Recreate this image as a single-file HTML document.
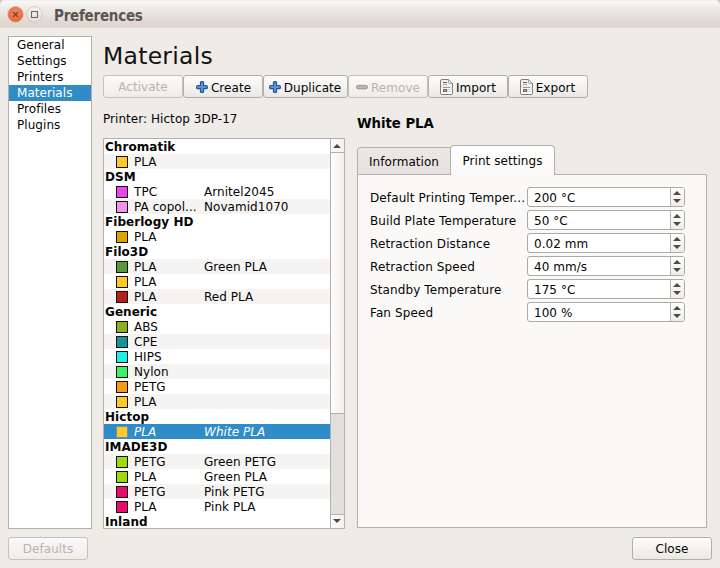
<!DOCTYPE html>
<html><head><meta charset="utf-8"><title>Preferences</title>
<style>
*{box-sizing:border-box;margin:0;padding:0}
html,body{width:720px;height:568px;overflow:hidden}
body{background:#efebe7;font-family:"DejaVu Sans","Liberation Sans",sans-serif;font-size:12px;letter-spacing:0.05px;color:#050505;position:relative}
.abs{position:absolute}
#titlebar{left:0;top:0;width:720px;height:28px;background:linear-gradient(#eeece9 0,#f8f7f5 1.500px,#f4f2ef 4px,#e9e5e0 13px,#e1dad3 21px,#ddd5cd 27px,#e6e0da 27.800px,#ebe6e1 28px);border-top-left-radius:5px;border-top-right-radius:5px}
#title{left:54px;top:7px;font-weight:bold;font-size:15px;color:#5a5550;line-height:18px;font-family:"DejaVu Sans Condensed","DejaVu Sans","Liberation Sans",sans-serif;letter-spacing:-0.25px}
#wbtns{left:0;top:0}
#side{left:8px;top:36px;width:84px;height:493px;background:#fff;border:1px solid #b4afa9}
#side div{height:16px;line-height:16px;padding-left:8px}
#side .sel{background:#308cc6;color:#fff}
#h1{left:103px;top:39px;font-size:23.5px;line-height:34px;color:#111;letter-spacing:0.25px}
.btn{top:75px;height:23px;border:1px solid #b3aea8;border-radius:3px;background:linear-gradient(#fdfdfc,#ebe8e4);line-height:25px;text-align:center;white-space:nowrap}
.btn.dis{color:#b7b3af;background:linear-gradient(#fbfaf9,#efece8);border-color:#c6c1bb}
.btn svg{vertical-align:-2px;margin-right:4px}
.btn svg.doc{vertical-align:-3px;margin-left:1px;margin-right:2px}
.btn svg.minus{vertical-align:-3px;margin-right:2px;margin-left:0}
.btn svg.plus{vertical-align:-2px;margin-right:2px;margin-left:1px}
#printer{left:103px;top:111px;line-height:16px}
#list{left:103px;top:138px;width:242px;height:391px;background:#fff;border:1px solid #b4afa9;overflow:hidden}
#rows{position:absolute;left:0;top:0;width:226px}
.r{height:15px;line-height:17px;position:relative;white-space:nowrap}
.g{font-weight:bold;padding-left:1px}
.alt{background:#f5f4f2}
.sw{position:absolute;left:12px;top:2px;width:12px;height:12px;border:1px solid #111}
.c1{position:absolute;left:30px}
.c2{position:absolute;left:100px}
.r.sel{background:#308cc6;color:#fff;font-style:italic}
#sb{left:226px;top:0;width:14px;height:389px;border-left:1px solid #b4afa9;background:#e2e0dd}
#wp{left:357px;top:114px;font-weight:bold;font-size:13.3px;line-height:19px;letter-spacing:-0.05px}
#pane{left:357px;top:174px;width:350px;height:354px;background:#fbf9f7;border:1px solid #b4afa9}
.tab{border:1px solid #b4afa9;border-bottom:none;text-align:center}
#t1{left:357px;top:147px;width:94px;height:27px;background:linear-gradient(#ebe8e5,#e5e2de);line-height:28px;border-top-left-radius:4px}
#t2{left:450px;top:145px;width:105px;height:30px;background:linear-gradient(#fff,#fbf9f7);line-height:31px;border-top-left-radius:4px;border-top-right-radius:4px}
.lbl{left:370px;line-height:16px;letter-spacing:0.11px}
.spin{left:527px;width:158px;height:20px;border:1px solid #aea9a3;border-radius:3px;background:#fff;line-height:20px;padding-left:6px}
.spin i{position:absolute;right:0;top:0;width:14px;height:18px;border-left:1px solid #bab5af;background:linear-gradient(#fff,#efedea);border-radius:0 2px 2px 0}
.spin i:before{content:"";position:absolute;left:2px;top:3px;border:4px solid transparent;border-top:none;border-bottom:4px solid #4a4a4a}
.spin i:after{content:"";position:absolute;left:2px;top:11px;border:4px solid transparent;border-bottom:none;border-top:4px solid #4a4a4a}
</style></head><body>
<div class="abs" style="left:0;top:0;width:720px;height:8px;background:#cdcac5"></div>
<div id="titlebar" class="abs"></div>
<svg id="wbtns" class="abs" width="50" height="28" viewBox="0 0 50 28">
<defs><radialGradient id="cg" cx="50%" cy="35%" r="65%"><stop offset="0" stop-color="#f18a62"/><stop offset="1" stop-color="#e86537"/></radialGradient>
<linearGradient id="mg" x1="0" y1="0" x2="0" y2="1"><stop offset="0" stop-color="#f7f6f4"/><stop offset="1" stop-color="#e4dfd9"/></linearGradient></defs>
<circle cx="15.500" cy="14.300" r="7.600" fill="url(#cg)" stroke="#d9835f" stroke-width="0.600"/>
<path d="M13 11.800l5 5M18 11.800l-5 5" stroke="#6b3a26" stroke-width="1.200" fill="none"/>
<circle cx="34.500" cy="14.300" r="7.700" fill="url(#mg)" stroke="#c9bfb5" stroke-width="0.800"/>
<rect x="31.500" y="11.500" width="6" height="6" fill="none" stroke="#70665d" stroke-width="1.100"/>
</svg>
<div id="title" class="abs">Preferences</div>

<div id="side" class="abs">
<div>General</div><div>Settings</div><div>Printers</div><div class="sel">Materials</div><div>Profiles</div><div>Plugins</div>
</div>

<div id="h1" class="abs">Materials</div>

<div class="abs btn dis" style="left:103px;width:80px;line-height:23px">Activate</div>
<div class="abs btn" style="left:183px;width:80px"><svg class="plus" width="13" height="13" viewBox="0 0 13 13"><rect x="3.900" y="0.100" width="4.200" height="11.900" rx="1.500" fill="#23539d"/><rect x="0.050" y="3.950" width="11.900" height="4.200" rx="1.500" fill="#23539d"/><rect x="5" y="1.200" width="2" height="9.700" rx="0.800" fill="#6191d0"/><rect x="1.150" y="5.050" width="9.700" height="2" rx="0.800" fill="#6191d0"/></svg>Create</div>
<div class="abs btn" style="left:263px;width:85px;padding-right:2px"><svg class="plus" width="13" height="13" viewBox="0 0 13 13"><rect x="3.900" y="0.100" width="4.200" height="11.900" rx="1.500" fill="#23539d"/><rect x="0.050" y="3.950" width="11.900" height="4.200" rx="1.500" fill="#23539d"/><rect x="5" y="1.200" width="2" height="9.700" rx="0.800" fill="#6191d0"/><rect x="1.150" y="5.050" width="9.700" height="2" rx="0.800" fill="#6191d0"/></svg>Duplicate</div>
<div class="abs btn dis" style="left:348px;width:80px"><svg class="minus" width="13" height="13" viewBox="0 0 13 13"><rect x="0.500" y="3.400" width="11" height="3.400" rx="1.600" fill="#b9b7b3" stroke="#908e8a" stroke-width="0.900"/></svg>Remove</div>
<div class="abs btn" style="left:428px;width:80px;padding-right:1px"><svg class="doc" width="14" height="16" viewBox="0 0 14 16"><path d="M2 0.500H8.500L12.500 4.500V14a1.500 1.500 0 0 1 -1.500 1.500H2a1.500 1.500 0 0 1 -1.500 -1.500V2a1.500 1.500 0 0 1 1.500 -1.500z" fill="#efefed" stroke="#7d7f7a"/><path d="M1 9.500h11v4a1.500 1.500 0 0 1 -1.500 1.500h-8a1.500 1.500 0 0 1 -1.500 -1.500z" fill="#fdfdfd"/><path d="M8.500 0.700V3a1.500 1.500 0 0 0 1.500 1.500H12.300z" fill="#fff" stroke="#8d8f8a" stroke-width="0.800" stroke-linejoin="round"/><path d="M3 3.500H7" stroke="#5e5f5c" fill="none"/><path d="M3 5.500H7" stroke="#a8a9a6" fill="none"/><path d="M3 8.500H10" stroke="#969794" fill="none"/><path d="M8.500 10.500H10.500M8.500 12.500H10.500" stroke="#bdbebb" fill="none"/><rect x="3" y="10" width="4.200" height="3" rx="0.600" fill="#5a5b58"/><rect x="4" y="10.800" width="2.200" height="1.300" fill="#f7a823"/></svg>Import</div>
<div class="abs btn" style="left:508px;width:80px;padding-right:2px"><svg class="doc" width="14" height="16" viewBox="0 0 14 16"><path d="M2 0.500H8.500L12.500 4.500V14a1.500 1.500 0 0 1 -1.500 1.500H2a1.500 1.500 0 0 1 -1.500 -1.500V2a1.500 1.500 0 0 1 1.500 -1.500z" fill="#efefed" stroke="#7d7f7a"/><path d="M1 9.500h11v4a1.500 1.500 0 0 1 -1.500 1.500h-8a1.500 1.500 0 0 1 -1.500 -1.500z" fill="#fdfdfd"/><path d="M8.500 0.700V3a1.500 1.500 0 0 0 1.500 1.500H12.300z" fill="#fff" stroke="#8d8f8a" stroke-width="0.800" stroke-linejoin="round"/><path d="M3 3.500H7" stroke="#5e5f5c" fill="none"/><path d="M3 5.500H7" stroke="#a8a9a6" fill="none"/><path d="M3 8.500H10" stroke="#969794" fill="none"/><path d="M8.500 10.500H10.500M8.500 12.500H10.500" stroke="#bdbebb" fill="none"/><rect x="3" y="10" width="4.200" height="3" rx="0.600" fill="#5a5b58"/><rect x="4" y="10.800" width="2.200" height="1.300" fill="#f7a823"/></svg>Export</div>

<div id="printer" class="abs">Printer: Hictop 3DP-17</div>

<div id="list" class="abs"><div id="rows">
<div class="r g">Chromatik</div>
<div class="r alt"><b class="sw" style="background:#ffc924"></b><span class="c1">PLA</span></div>
<div class="r g">DSM</div>
<div class="r"><b class="sw" style="background:#ec45ec"></b><span class="c1">TPC</span><span class="c2">Arnitel2045</span></div>
<div class="r alt"><b class="sw" style="background:#f093f0"></b><span class="c1">PA copol...</span><span class="c2">Novamid1070</span></div>
<div class="r g">Fiberlogy HD</div>
<div class="r"><b class="sw" style="background:#dfa300"></b><span class="c1">PLA</span></div>
<div class="r g">Filo3D</div>
<div class="r alt"><b class="sw" style="background:#5b9a3c"></b><span class="c1">PLA</span><span class="c2">Green PLA</span></div>
<div class="r"><b class="sw" style="background:#ffc924"></b><span class="c1">PLA</span></div>
<div class="r alt"><b class="sw" style="background:#b8211a"></b><span class="c1">PLA</span><span class="c2">Red PLA</span></div>
<div class="r g">Generic</div>
<div class="r"><b class="sw" style="background:#8cb219"></b><span class="c1">ABS</span></div>
<div class="r alt"><b class="sw" style="background:#159499"></b><span class="c1">CPE</span></div>
<div class="r"><b class="sw" style="background:#1eefe2"></b><span class="c1">HIPS</span></div>
<div class="r alt"><b class="sw" style="background:#3df266"></b><span class="c1">Nylon</span></div>
<div class="r"><b class="sw" style="background:#f59b15"></b><span class="c1">PETG</span></div>
<div class="r alt"><b class="sw" style="background:#ffc924"></b><span class="c1">PLA</span></div>
<div class="r g">Hictop</div>
<div class="r sel"><b class="sw" style="background:#ffc924;border-color:#6a8fb0"></b><span class="c1">PLA</span><span class="c2">White PLA</span></div>
<div class="r g">IMADE3D</div>
<div class="r alt"><b class="sw" style="background:#a0d80b"></b><span class="c1">PETG</span><span class="c2">Green PETG</span></div>
<div class="r"><b class="sw" style="background:#a0d80b"></b><span class="c1">PLA</span><span class="c2">Green PLA</span></div>
<div class="r alt"><b class="sw" style="background:#e90b6e"></b><span class="c1">PETG</span><span class="c2">Pink PETG</span></div>
<div class="r"><b class="sw" style="background:#e90b6e"></b><span class="c1">PLA</span><span class="c2">Pink PLA</span></div>
<div class="r g">Inland</div>
</div>
<div id="sb" class="abs">
<div class="abs" style="left:0;top:0;width:13px;height:14px;background:linear-gradient(90deg,#fdfdfc,#f3f1ee);border-bottom:1px solid #b4afa9"></div>
<div class="abs" style="left:2px;top:5px;border:4px solid transparent;border-top:none;border-bottom:4px solid #4a4a4a"></div>
<div class="abs" style="left:0;top:14px;width:13px;height:261px;background:linear-gradient(90deg,#fdfdfc,#f1efec);border-bottom:1px solid #b4afa9"></div>
<div class="abs" style="left:0;top:375px;width:13px;height:14px;background:linear-gradient(90deg,#fdfdfc,#f3f1ee);border-top:1px solid #b4afa9"></div>
<div class="abs" style="left:2px;top:380px;border:4px solid transparent;border-bottom:none;border-top:4px solid #4a4a4a"></div>
</div>
</div>

<div id="wp" class="abs">White PLA</div>
<div id="pane" class="abs"></div>
<div id="t1" class="abs tab">Information</div>
<div id="t2" class="abs tab">Print settings</div>

<div class="abs lbl" style="top:190px">Default Printing Temper...</div>
<div class="abs lbl" style="top:213px">Build Plate Temperature</div>
<div class="abs lbl" style="top:236px">Retraction Distance</div>
<div class="abs lbl" style="top:259px">Retraction Speed</div>
<div class="abs lbl" style="top:282px">Standby Temperature</div>
<div class="abs lbl" style="top:305px">Fan Speed</div>
<div class="abs spin" style="top:187px">200 °C<i></i></div>
<div class="abs spin" style="top:210px">50 °C<i></i></div>
<div class="abs spin" style="top:233px">0.02 mm<i></i></div>
<div class="abs spin" style="top:256px">40 mm/s<i></i></div>
<div class="abs spin" style="top:279px">175 °C<i></i></div>
<div class="abs spin" style="top:302px">100 %<i></i></div>

<div class="abs btn dis" style="left:8px;top:537px;width:80px;line-height:23px">Defaults</div>
<div class="abs btn" style="left:632px;top:537px;width:80px;line-height:23px">Close</div>
</body></html>
